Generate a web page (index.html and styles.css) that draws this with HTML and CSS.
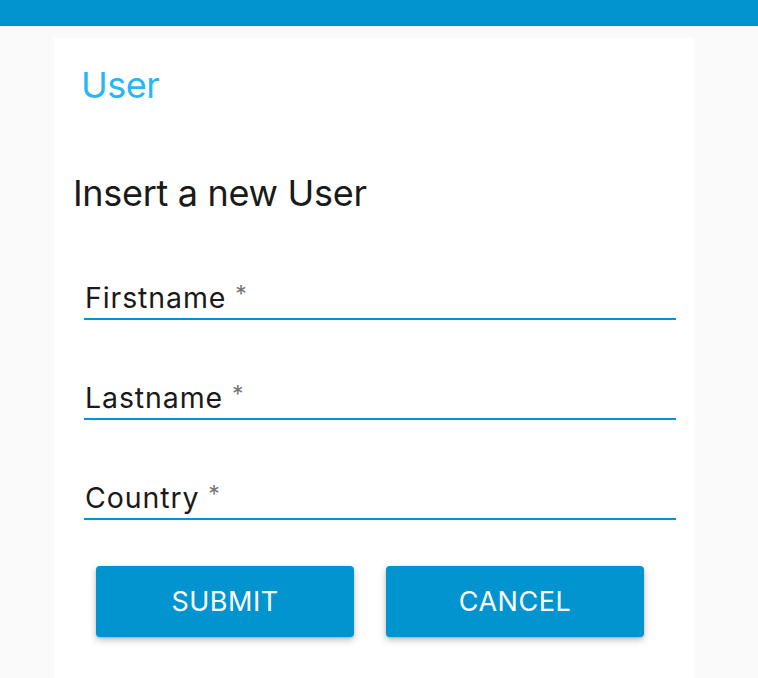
FILE: index.html
```html
<!DOCTYPE html>
<html>
<head>
<meta charset="utf-8">
<link rel="stylesheet" href="styles.css">
</head>
<body>
<header class="topbar"></header>
<main class="page">
  <section class="card">
    <h1 class="card-title">User</h1>
    <h2 class="form-heading">Insert a new User</h2>
    <form class="form">
      <div class="field"><label class="field-label">Firstname <span class="req">*</span></label></div>
      <div class="field"><label class="field-label">Lastname <span class="req">*</span></label></div>
      <div class="field"><label class="field-label">Country <span class="req">*</span></label></div>
      <div class="actions">
        <button type="button" class="btn">SUBMIT</button>
        <button type="button" class="btn">CANCEL</button>
      </div>
    </form>
  </section>
</main>
</body>
</html>
```

FILE: styles.css
```css
* { box-sizing: border-box; }
html, body { margin: 0; padding: 0; }
body {
  background: #fafafa;
  font-family: Inter, Roboto, sans-serif;
  color: #1a1a1a;
  height: 678px;
  overflow: hidden;
}
.topbar {
  height: 26px;
  background: #0294cf;
}
.page {
  padding: 12px 64px 0 54px;
}
.card {
  background: #ffffff;
  width: 640px;
  height: 660px;
  padding: 24px 18px 0 19px;
}
.card-title {
  margin: 0 0 0 8px;
  font-weight: 400;
  font-size: 36px;
  line-height: 46px;
  letter-spacing: -0.5px;
  color: #29b6f6;
}
.form-heading {
  margin: 65px 0 0 0;
  font-weight: 400;
  font-size: 36px;
  line-height: 40px;
  letter-spacing: -0.3px;
  color: #1a1a1a;
}
.form {
  padding: 0 0 0 11px;
  width: 603px;
}
.field {
  margin-top: 61px;
  border-bottom: 2px solid #0294cf;
  height: 46px;
}
.field + .field { margin-top: 54px; }
.field-label {
  display: block;
  font-size: 28.5px;
  line-height: 40px;
  letter-spacing: 0.9px;
  padding-left: 1px;
  color: #1a1a1a;
}
.req { color: #757575; font-size: 23px; vertical-align: 6px; letter-spacing: 0; }
.actions {
  display: flex;
  gap: 32px;
  padding-left: 12px;
  margin-top: 46px;
}
.btn {
  width: 258px;
  height: 71px;
  border: none;
  border-radius: 4px;
  background: #0294cf;
  color: #ffffff;
  font-family: Inter, Roboto, sans-serif;
  font-size: 27px;
  letter-spacing: 0.5px;
  box-shadow: 0 3px 7px rgba(0,0,0,0.25), 0 1px 2px rgba(0,0,0,0.15);
}
```
